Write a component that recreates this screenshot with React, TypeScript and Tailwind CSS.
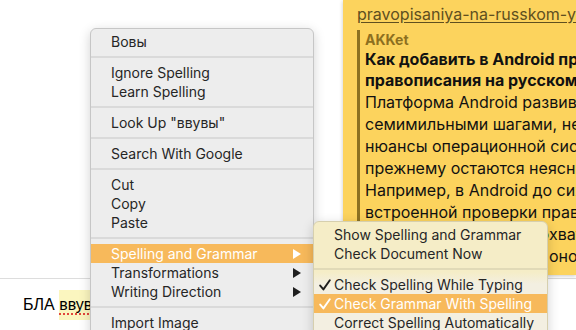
import type { ReactNode } from "react";

type Item = { label: string; sub?: boolean; active?: boolean; checked?: boolean };

const mainGroups: Item[][] = [
  [{ label: "Вовы" }],
  [{ label: "Ignore Spelling" }, { label: "Learn Spelling" }],
  [{ label: 'Look Up "ввувы"' }],
  [{ label: "Search With Google" }],
  [{ label: "Cut" }, { label: "Copy" }, { label: "Paste" }],
  [
    { label: "Spelling and Grammar", sub: true, active: true },
    { label: "Transformations", sub: true },
    { label: "Writing Direction", sub: true },
  ],
  [{ label: "Import Image" }],
];

const subGroups: Item[][] = [
  [{ label: "Show Spelling and Grammar" }, { label: "Check Document Now" }],
  [
    { label: "Check Spelling While Typing", checked: true },
    { label: "Check Grammar With Spelling", checked: true, active: true },
    { label: "Correct Spelling Automatically" },
  ],
];

function Arrow({ white }: { white?: boolean }) {
  return (
    <svg width="8" height="10" viewBox="0 0 8 10" className="shrink-0">
      <path d="M0 0 L8 5 L0 10 Z" fill={white ? "#ffffff" : "#1f1f1f"} />
    </svg>
  );
}

function Check({ white }: { white?: boolean }) {
  return (
    <svg width="12" height="12" viewBox="0 0 12 12" className="absolute left-[5px] top-[4px]">
      <path
        d="M1.2 6.6 L4.4 10.4 L10.8 1.2"
        fill="none"
        stroke={white ? "#ffffff" : "#1f1f1f"}
        strokeWidth="1.9"
        strokeLinecap="round"
        strokeLinejoin="round"
      />
    </svg>
  );
}

function MenuRow({ item }: { item: Item }) {
  return (
    <div
      className={`relative flex h-[19px] items-center justify-between pl-[20px] pr-[12px] leading-[19px] ${
        item.active ? "bg-[#f7b95b] text-white" : "text-[#262626]"
      }`}
    >
      {item.checked && <Check white={item.active} />}
      <span className="whitespace-nowrap">{item.label}</span>
      {item.sub && <Arrow white={item.active} />}
    </div>
  );
}

function Menu({ groups }: { groups: Item[][] }) {
  const out: ReactNode[] = [];
  groups.forEach((g, gi) => {
    if (gi > 0) out.push(<div key={"s" + gi} className="my-[5px] h-[2px] bg-[#00000014]" />);
    g.forEach((it) => out.push(<MenuRow key={it.label} item={it} />));
  });
  return <>{out}</>;
}

const lines = [
  "Платформа Android развивается",
  "семимильными шагами, не все",
  "нюансы операционной системы по",
  "прежнему остаются неясными.",
  "Например, в Android до сих пор",
  "встроенной проверки правописания",
];

// lines whose start is hidden under the submenu; tail is what peeks out on the right
const tails = [
  ["на русском языке, которой так не ", "хватает"],
  ["пользователям смартф", "онов"],
];

export default function App() {
  return (
    <div className="relative h-[330px] w-[576px] overflow-hidden bg-white font-['Inter',sans-serif]">
      {/* chat area */}
      <div className="flex h-[278px]">
        <div className="w-[343px] shrink-0" />
        <div className="h-[275px] flex-1 overflow-hidden bg-[#fcd35d] pl-[14px] pt-[4px] text-[16px] text-[#111] shadow-[0_1px_4px_rgba(0,0,0,0.22)]">
          <div className="whitespace-nowrap text-[16px] leading-[20px] text-[#5f4f1f] underline underline-offset-2">
            pravopisaniya-na-russkom-yazyke/
          </div>
          <div className="mt-[6px] border-l-[3px] border-[#8c7222] pl-[5px]">
            <div className="text-[14px] font-bold leading-[19px] text-[#8d6f1f]">AKKet</div>
            <div className="whitespace-nowrap font-bold leading-[21px]">Как добавить в Android проверку</div>
            <div className="whitespace-nowrap font-bold leading-[21px]">правописания на русском языке</div>
            {lines.map((l) => (
              <div key={l} className="whitespace-nowrap leading-[22px]">
                {l}
              </div>
            ))}
            {tails.map(([hidden, shown]) => (
              <div key={shown} className="flex whitespace-nowrap leading-[22px]">
                <span className="w-[184px] shrink-0 overflow-hidden">{hidden}</span>
                <span>{shown}</span>
              </div>
            ))}
          </div>
        </div>
      </div>

      {/* input row */}
      <div className="flex h-[52px] items-center border-t border-[#dddddd] pl-[23px] font-['Liberation_Sans',sans-serif] text-[16px] text-black">
        <span>БЛА&nbsp;</span>
        <span className="bg-[#fbf6bf] py-[3px] underline decoration-[#e2463c] decoration-dotted decoration-2 underline-offset-[4px]">
          ввувы
        </span>
      </div>

      {/* context menu */}
      <div className="absolute left-[90px] top-[28px] h-[320px] w-[224px] rounded-[6px] border border-[#c6c6c6] bg-[#ededed] pt-[3px] text-[14px] shadow-[0_3px_12px_rgba(0,0,0,0.18)]">
        <Menu groups={mainGroups} />
      </div>

      {/* submenu */}
      <div className="absolute left-[313px] top-[221px] h-[120px] w-[235px] rounded-[6px] border border-[#d6cfae] bg-[linear-gradient(to_bottom,#f5edc7_0px,#f5edc7_50px,#f3efe1_62px)] pt-[3px] text-[14px] shadow-[0_3px_12px_rgba(0,0,0,0.18)]">
        <Menu groups={subGroups} />
      </div>
    </div>
  );
}
